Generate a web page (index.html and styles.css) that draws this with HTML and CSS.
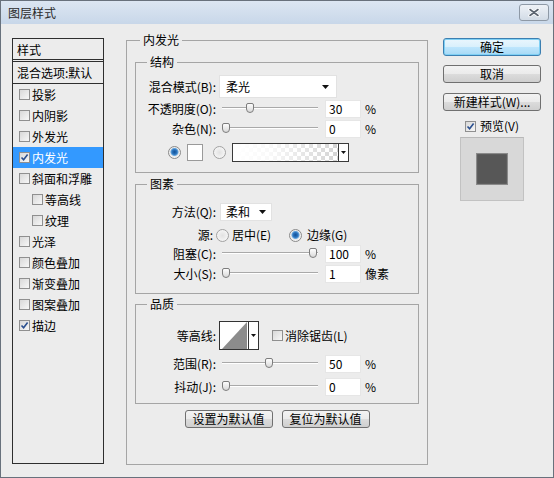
FILE: index.html
```html
<!DOCTYPE html>
<html lang="zh">
<head>
<meta charset="utf-8">
<title>图层样式</title>
<link rel="stylesheet" href="styles.css">
</head>
<body>
<div class="win">
  <div class="titlebar">
    <span class="title">图层样式</span>
    <div class="close">
      <svg width="12" height="9" viewBox="0 0 12 9"><path d="M2 1.5 L10 7.5 M10 1.5 L2 7.5" stroke="#ffffff" stroke-width="3.4" stroke-linecap="round"/><path d="M2 1.5 L10 7.5 M10 1.5 L2 7.5" stroke="#5b6470" stroke-width="1.6" stroke-linecap="round"/></svg>
    </div>
  </div>
  <div class="client">
    <div class="styles-list">
      <div class="list-head">样式</div>
      <div class="list-blend">混合选项:默认</div>
      <div class="item"><span class="cb"></span>投影</div>
      <div class="item"><span class="cb"></span>内阴影</div>
      <div class="item"><span class="cb"></span>外发光</div>
      <div class="item selected"><span class="cb"><svg width="9" height="9" viewBox="0 0 9 9"><path d="M1.5 4.5 L3.6 6.8 L7.6 1.6" fill="none" stroke="#2a4f8f" stroke-width="1.6"/></svg></span>内发光</div>
      <div class="item"><span class="cb"></span>斜面和浮雕</div>
      <div class="item sub"><span class="cb"></span>等高线</div>
      <div class="item sub"><span class="cb"></span>纹理</div>
      <div class="item"><span class="cb"></span>光泽</div>
      <div class="item"><span class="cb"></span>颜色叠加</div>
      <div class="item"><span class="cb"></span>渐变叠加</div>
      <div class="item"><span class="cb"></span>图案叠加</div>
      <div class="item"><span class="cb"><svg width="9" height="9" viewBox="0 0 9 9"><path d="M1.5 4.5 L3.6 6.8 L7.6 1.6" fill="none" stroke="#2a4f8f" stroke-width="1.6"/></svg></span>描边</div>
    </div>

    <fieldset class="panel">
      <legend>内发光</legend>

      <fieldset class="group g-struct">
        <legend>结构</legend>
        <div class="row r-blend">
          <span class="lbl">混合模式(B):</span>
          <div class="select sel-blend"><span>柔光</span><svg width="7" height="4" viewBox="0 0 7 4"><polygon points="0,0 7,0 3.5,4" fill="#111"/></svg></div>
        </div>
        <div class="row r-s1">
          <span class="lbl">不透明度(O):</span>
          <div class="slider"><span class="thumb" style="margin-left:24px"></span></div>
          <div class="num">30</div><span class="unit">%</span>
        </div>
        <div class="row r-s2">
          <span class="lbl">杂色(N):</span>
          <div class="slider"><span class="thumb" style="margin-left:0px"></span></div>
          <div class="num">0</div><span class="unit">%</span>
        </div>
        <div class="row r-color">
          <span class="radio on"></span>
          <span class="swatch"></span>
          <span class="radio r2"></span>
          <div class="grad">
            <div class="grad-fill"></div>
            <div class="grad-arrow"><svg width="5" height="3" viewBox="0 0 5 3"><polygon points="0,0 5,0 2.5,3" fill="#111"/></svg></div>
          </div>
        </div>
      </fieldset>

      <fieldset class="group g-elem">
        <legend>图素</legend>
        <div class="row r-method">
          <span class="lbl">方法(Q):</span>
          <div class="select sel-method"><span>柔和</span><svg width="7" height="4" viewBox="0 0 7 4"><polygon points="0,0 7,0 3.5,4" fill="#111"/></svg></div>
        </div>
        <div class="row r-src">
          <span class="lbl lbl-src">源:</span>
          <span class="radio"></span>
          <span class="opt opt1">居中(E)</span>
          <span class="radio on"></span>
          <span class="opt opt2">边缘(G)</span>
        </div>
        <div class="row r-s3">
          <span class="lbl">阻塞(C):</span>
          <div class="slider"><span class="thumb" style="margin-left:87px"></span></div>
          <div class="num">100</div><span class="unit">%</span>
        </div>
        <div class="row r-s4">
          <span class="lbl">大小(S):</span>
          <div class="slider"><span class="thumb" style="margin-left:0px"></span></div>
          <div class="num">1</div><span class="unit">像素</span>
        </div>
      </fieldset>

      <fieldset class="group g-qual">
        <legend>品质</legend>
        <div class="row r-contour">
          <span class="lbl">等高线:</span>
          <div class="contour">
            <svg width="38" height="27" viewBox="0 0 38 27"><rect x="0" y="0" width="28" height="27" fill="#ffffff"/><polygon points="2,27 27,0 27,27" fill="#8c8c8c"/><rect x="28" y="0" width="10" height="27" fill="#ffffff"/><rect x="28" y="0" width="1" height="27" fill="#333"/><polygon points="31,12 36,12 33.5,15" fill="#111"/></svg>
          </div>
          <span class="cb cb-aa"></span>
          <span class="aa-text">消除锯齿(L)</span>
        </div>
        <div class="row r-s5">
          <span class="lbl">范围(R):</span>
          <div class="slider"><span class="thumb" style="margin-left:43px"></span></div>
          <div class="num">50</div><span class="unit">%</span>
        </div>
        <div class="row r-s6">
          <span class="lbl">抖动(J):</span>
          <div class="slider"><span class="thumb" style="margin-left:0px"></span></div>
          <div class="num">0</div><span class="unit">%</span>
        </div>
      </fieldset>

      <div class="defaults">
        <div class="btn">设置为默认值</div>
        <div class="btn">复位为默认值</div>
      </div>
    </fieldset>

    <div class="side">
      <div class="btn primary">确定</div>
      <div class="btn b-cancel">取消</div>
      <div class="btn b-new">新建样式(W)...</div>
      <div class="preview-row"><span class="cb"><svg width="9" height="9" viewBox="0 0 9 9"><path d="M1.5 4.5 L3.6 6.8 L7.6 1.6" fill="none" stroke="#2a4f8f" stroke-width="1.6"/></svg></span><span class="pv-text">预览(V)</span></div>
      <div class="preview"><div class="preview-square"></div></div>
    </div>
  </div>
</div>
</body>
</html>
```

FILE: styles.css
```css
* { box-sizing: border-box; }
html, body { margin: 0; padding: 0; }
body {
  width: 554px;
  height: 478px;
  overflow: hidden;
  font-family: "Noto Sans CJK SC", "Liberation Sans", sans-serif;
  font-size: 12px;
  line-height: 14px;
  color: #000;
  background: #ececec;
}
.win {
  width: 554px;
  height: 478px;
  border: 1px solid #68717c;
  background: #ececec;
  display: flex;
  flex-direction: column;
}
.titlebar {
  height: 23px;
  flex: none;
  display: flex;
  justify-content: space-between;
  align-items: flex-start;
  padding: 0 4px 0 7px;
  background: linear-gradient(#dce6f2, #c8d7e9);
}
.title { margin-top: 5px; color: #2a2a2a; }
.close {
  margin-top: 3px;
  width: 30px;
  height: 17px;
  border: 1px solid #8e99a6;
  border-radius: 3px;
  background: linear-gradient(#eef2f7, #d2dbe6);
  display: flex;
  align-items: center;
  justify-content: center;
}
.client {
  flex: 1;
  display: flex;
  align-items: flex-start;
  padding-left: 11px;
}

/* left list */
.styles-list {
  flex: none;
  margin-top: 14px;
  width: 92px;
  height: 426px;
  border: 1px solid #2e2e2e;
}
.list-head {
  height: 21px;
  padding: 1px 0 0 4px;
  display: flex;
  align-items: center;
  border-bottom: 1px solid #2e2e2e;
}
.list-blend {
  margin-top: 1px;
  height: 23px;
  padding-left: 4px;
  display: flex;
  align-items: center;
  border-top: 1px solid #2e2e2e;
  border-bottom: 1px solid #2e2e2e;
}
.item {
  height: 21px;
  display: flex;
  align-items: center;
  padding-left: 6px;
}
.item.sub { padding-left: 19px; }
.item.selected { background: #3399ff; color: #fff; }
.cb {
  flex: none;
  width: 11px;
  height: 11px;
  border: 1px solid #8f8f8f;
  background: linear-gradient(135deg, #d8d8d8, #f7f7f7);
  display: flex;
  align-items: center;
  justify-content: center;
  margin-right: 2px;
}
.item .cb { margin-right: 2px; }

/* middle panel */
.panel {
  flex: none;
  margin: 9px 0 0 22px;
  padding: 8px 8px 0;
  width: 302px;
  height: 432px;
  border: 1px solid #a5a5a5;
  min-width: 0;
}
.panel > legend { margin-left: 5px; padding: 0 3px; line-height: 14px; }
.group {
  margin: 0;
  padding: 0;
  border: 1px solid #a5a5a5;
  min-width: 0;
}
.group > legend { margin-left: 11px; padding: 0 3px; line-height: 14px; }
.g-struct { padding-bottom: 10px; }
.g-elem { margin-top: 4px; padding-bottom: 10px; }
.g-qual { margin-top: 3px; padding-bottom: 7px; }

.row { display: flex; align-items: center; height: 18px; }
.lbl { flex: none; width: 80px; text-align: right; white-space: nowrap; }

.r-blend { margin-top: 6px; height: 23px; }
.r-s1 { margin-top: 2px; }
.r-s2 { margin-top: 2px; }
.r-color { margin-top: 5px; height: 19px; padding-left: 32px; }
.r-method { margin-top: 12px; }
.r-src { margin-top: 5px; }
.r-s3 { margin-top: 1px; }
.r-s4 { margin-top: 2px; }
.r-contour { margin-top: 10px; height: 29px; }
.r-s5 { margin-top: 5px; }
.r-s6 { margin-top: 5px; }

.select {
  flex: none;
  background: #fff;
  border: 1px solid #e2e2e2;
  display: flex;
  align-items: center;
  justify-content: space-between;
}
.sel-blend { margin-left: 3px; width: 118px; height: 23px; padding: 0 7px 0 6px; }
.sel-method { margin-left: 4px; width: 52px; height: 18px; padding: 0 5px 0 5px; }

.slider {
  flex: none;
  margin-left: 6px;
  width: 96px;
  height: 18px;
  display: flex;
  align-items: flex-start;
  background: linear-gradient(to bottom, transparent 7px, #a9a9a9 7px, #a9a9a9 8px, #ffffff 8px, #ffffff 9px, transparent 9px);
}
.thumb {
  flex: none;
  margin-top: 3px;
  width: 8px;
  height: 10px;
  border: 1px solid #7d7d7d;
  border-radius: 2px 2px 4px 4px;
  background: linear-gradient(#fdfdfd, #d9d9d9);
}
.num {
  flex: none;
  margin-left: 7px;
  width: 36px;
  height: 18px;
  background: #fff;
  border: 1px solid #e6e6e6;
  padding-left: 3px;
  display: flex;
  align-items: center;
}
.unit { margin-left: 4px; }

.radio {
  flex: none;
  width: 13px;
  height: 13px;
  border-radius: 50%;
  border: 1px solid #a2a2a2;
  background: radial-gradient(circle at 50% 50%, #e2e2e2 0, #f6f6f6 6px);
}
.radio.on {
  border-color: #8a8a8a;
  background: radial-gradient(circle at 50% 45%, #0f4f96 0, #2f77c0 2.5px, #6aa8de 3.6px, #e9e9e9 4.4px, #f7f7f7 6px);
}
.swatch {
  flex: none;
  margin-left: 6px;
  width: 16px;
  height: 17px;
  background: #fff;
  border: 1px solid #9a9a9a;
}
.radio.r2 { margin-left: 10px; }
.grad {
  flex: none;
  margin-left: 6px;
  width: 117px;
  height: 19px;
  border: 1px solid #3a3a3a;
  display: flex;
}
.grad-fill {
  flex: 1;
  background:
    linear-gradient(to right, #ffffff 0%, rgba(255,255,255,0.85) 35%, rgba(255,255,255,0) 100%),
    repeating-conic-gradient(#d4d4d4 0 25%, #ffffff 0 50%) 0 0 / 8px 8px;
}
.grad-arrow {
  flex: none;
  width: 10px;
  border-left: 1px solid #3a3a3a;
  background: #fff;
  display: flex;
  align-items: center;
  justify-content: center;
}

.lbl-src { width: 77px; }
.r-src .radio { margin-left: 3px; }
.opt { flex: none; margin-left: 3px; }
.opt1 { width: 54px; }
.opt2 { margin-left: 5px; }

.contour {
  flex: none;
  margin-left: 3px;
  width: 40px;
  height: 29px;
  border: 1px solid #333;
  background: #fff;
  display: flex;
}
.cb-aa { margin-left: 13px; margin-right: 2px; }

.defaults {
  margin-top: 6px;
  display: flex;
  justify-content: center;
  gap: 9px;
}
.btn {
  flex: none;
  height: 18px;
  border: 1px solid #707070;
  border-radius: 3px;
  background: linear-gradient(#f3f3f3, #ebebeb 49%, #dcdcdc 50%, #cfcfcf);
  display: flex;
  align-items: center;
  justify-content: center;
  white-space: nowrap;
}
.defaults .btn { width: 88px; }

/* right column */
.side {
  flex: none;
  margin: 14px 0 0 15px;
  width: 98px;
  display: flex;
  flex-direction: column;
  align-items: center;
}
.side .btn { width: 98px; }
.btn.primary {
  border-color: #3c7fb1;
  background: linear-gradient(#eaf6fd, #d9f0fc 49%, #bee6fd 50%, #a7d9f5);
  box-shadow: inset 0 0 0 1px #7fd0f4;
}
.b-cancel { margin-top: 9px; }
.b-new { margin-top: 10px; }
.preview-row {
  margin-top: 8px;
  height: 14px;
  display: flex;
  align-items: center;
}
.preview-row .cb { margin-right: 4px; }
.preview {
  margin-top: 4px;
  width: 64px;
  height: 64px;
  background: #d8d8d8;
  border: 1px solid #c2c2c2;
  border-top-color: #b8b8b8;
  display: flex;
  align-items: center;
  justify-content: center;
}
.preview-square {
  width: 32px;
  height: 32px;
  background: #575757;
  border: 1px solid #8a8a8a;
  box-shadow: inset 0 0 1px #9a9a9a;
}
```
